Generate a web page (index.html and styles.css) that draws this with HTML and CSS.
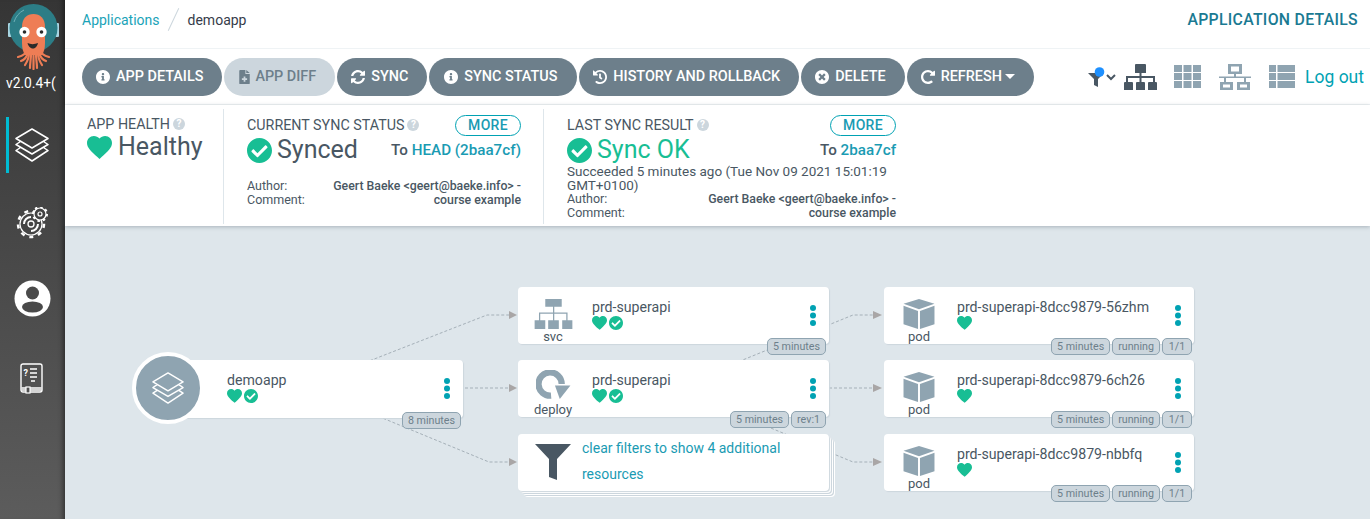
FILE: index.html
```html
<!DOCTYPE html>
<html>
<head>
    <title>demoapp - Application Details</title>
    <link rel="stylesheet" href="styles.css">
</head>
<body>
    <svg class="defs" width="0" height="0">
        <symbol id="i-heart" viewBox="2 3 20 18.4"><path fill="currentColor" d="M12 21.35l-1.45-1.32C5.4 15.36 2 12.28 2 8.5 2 5.42 4.42 3 7.5 3c1.74 0 3.41.81 4.5 2.09C13.09 3.81 14.76 3 16.5 3 19.58 3 22 5.42 22 8.5c0 3.78-3.4 6.86-8.55 11.54L12 21.35z"/></symbol>
        <symbol id="i-check" viewBox="8 8 496 496"><path fill="currentColor" d="M504 256c0 136.967-111.033 248-248 248S8 392.967 8 256 119.033 8 256 8s248 111.033 248 248zM227.314 387.314l184-184c6.248-6.248 6.248-16.379 0-22.627l-22.627-22.627c-6.248-6.249-16.379-6.249-22.628 0L216 308.118l-70.059-70.059c-6.248-6.248-16.379-6.248-22.628 0l-22.627 22.627c-6.248 6.248-6.248 16.379 0 22.627l104 104c6.249 6.249 16.379 6.249 22.628.001z"/></symbol>
        <symbol id="i-info" viewBox="8 8 496 496"><path fill="currentColor" d="M256 8C119.043 8 8 119.083 8 256c0 136.997 111.043 248 248 248s248-111.003 248-248C504 119.083 392.957 8 256 8zm0 110c23.196 0 42 18.804 42 42s-18.804 42-42 42-42-18.804-42-42 18.804-42 42-42zm56 254c0 6.627-5.373 12-12 12h-88c-6.627 0-12-5.373-12-12v-24c0-6.627 5.373-12 12-12h12v-64h-12c-6.627 0-12-5.373-12-12v-24c0-6.627 5.373-12 12-12h64c6.627 0 12 5.373 12 12v100h12c6.627 0 12 5.373 12 12v24z"/></symbol>
        <symbol id="i-sync" viewBox="8 8 496 496"><path fill="currentColor" d="M370.72 133.28C339.458 104.008 298.888 87.962 255.848 88c-77.458.068-144.328 53.178-162.791 126.85-1.344 5.363-6.122 9.15-11.651 9.15H24.103c-7.498 0-13.194-6.807-11.807-14.176C33.933 94.924 134.813 8 256 8c66.448 0 126.791 26.136 171.315 68.685L463.03 40.97C478.149 25.851 504 36.559 504 57.941V192c0 13.255-10.745 24-24 24H345.941c-21.382 0-32.09-25.851-16.971-40.971l41.75-41.749zM32 296h134.059c21.382 0 32.09 25.851 16.971 40.971l-41.75 41.75c31.262 29.273 71.835 45.319 114.876 45.28 77.418-.07 144.315-53.144 162.787-126.849 1.344-5.363 6.122-9.15 11.651-9.15h57.304c7.498 0 13.194 6.807 11.807 14.176C478.067 417.076 377.187 504 256 504c-66.448 0-126.791-26.136-171.315-68.685L48.97 471.03C33.851 486.149 8 475.441 8 454.059V320c0-13.255 10.745-24 24-24z"/></symbol>
        <symbol id="i-history" viewBox="8 8 496 496"><path fill="currentColor" d="M504 255.531c.253 136.64-111.18 248.372-247.82 248.468-59.015.042-113.223-20.53-155.822-54.911-11.077-8.94-11.905-25.541-1.839-35.607l11.267-11.267c8.609-8.609 22.353-9.551 31.891-1.984C173.062 425.135 212.781 440 256 440c101.705 0 184-82.311 184-184 0-101.705-82.311-184-184-184-48.814 0-93.149 18.969-126.068 49.932l50.754 50.754c10.08 10.08 2.941 27.314-11.313 27.314H24c-8.837 0-16-7.163-16-16V38.627c0-14.254 17.234-21.393 27.314-11.314l49.372 49.372C129.209 34.136 189.552 8 256 8c136.81 0 247.747 110.78 248 247.531zm-180.912 78.784l9.823-12.63c8.138-10.463 6.253-25.542-4.21-33.679L288 256.349V152c0-13.255-10.745-24-24-24h-16c-13.255 0-24 10.745-24 24v135.651l65.409 50.874c10.463 8.137 25.541 6.253 33.679-4.21z"/></symbol>
        <symbol id="i-times" viewBox="8 8 496 496"><path fill="currentColor" d="M256 8C119 8 8 119 8 256s111 248 248 248 248-111 248-248S393 8 256 8zm121.6 313.1c4.7 4.7 4.7 12.3 0 17L338 377.6c-4.7 4.7-12.3 4.7-17 0L256 312l-65.1 65.6c-4.7 4.7-12.3 4.7-17 0L134.4 338c-4.7-4.7-4.7-12.3 0-17l65.6-65-65.6-65.1c-4.7-4.7-4.7-12.3 0-17l39.6-39.6c4.7-4.7 12.3-4.7 17 0l65 65.7 65.1-65.6c4.7-4.7 12.3-4.7 17 0l39.6 39.6c4.7 4.7 4.7 12.3 0 17L312 256l65.6 65.1z"/></symbol>
        <symbol id="i-redo" viewBox="8 8 496 496"><path fill="currentColor" d="M256.455 8c66.269.119 126.437 26.233 170.859 68.685l35.715-35.715C478.149 25.851 504 36.559 504 57.941V192c0 13.255-10.745 24-24 24H345.941c-21.382 0-32.09-25.851-16.971-40.971l41.75-41.75c-30.864-28.899-70.801-44.907-113.23-45.273-92.398-.798-170.283 73.977-169.484 169.442C88.764 348.009 162.184 424 256 424c41.127 0 79.997-14.678 110.629-41.556 4.743-4.161 11.906-3.908 16.368.553l39.662 39.662c4.872 4.872 4.631 12.815-.482 17.433C378.202 479.813 319.926 504 256 504 119.034 504 8.001 392.967 8 256.002 7.999 119.193 119.646 7.755 256.455 8z"/></symbol>
        <symbol id="i-file" viewBox="0 0 12 16"><path fill="currentColor" fill-rule="evenodd" d="M0 1a1 1 0 0 1 1-1h6v4.500h5V15a1 1 0 0 1-1 1H1a1 1 0 0 1-1-1zM5 7.500v2H3v1.800h2v2h2v-2h2V9.500H7v-2zM8 0l4 3.500H8z"/></symbol>
        <symbol id="i-layers" viewBox="0 0 34 34"><path fill="none" stroke="currentColor" stroke-width="1.5" stroke-linejoin="round" d="M17 1L33 10.500 17 20 1 10.500zM5.500 13.500L1 16.500 17 26 33 16.500 28.500 13.500M5.500 19.500L1 22.500 17 33 33 22.500 28.500 19.500"/></symbol>
        <symbol id="i-svc" viewBox="0 0 39 31"><path fill="currentColor" d="M11 0h17v8H11zM19 8h1.300v6H34v8h-1.300v-6.700H20.300V22H19v-6.700H5.800V22H4.500v-8H19zM0 22h11v9H0zM14 22h11v9H14zM28.500 22H39v9H28.500z"/></symbol>
        <symbol id="i-deploy" viewBox="0 0 35 30"><path fill="none" stroke="currentColor" stroke-width="6.500" d="M15 26.500A12 12 0 1 1 26 14.500"/><path fill="currentColor" d="M19 16h16L24 30z"/></symbol>
        <symbol id="i-pod" viewBox="0 0 32 31"><path fill="currentColor" d="M16 0l16 5-16 5.500L0 5zM0 7l15 5.500V31L0 26zM32 7l-15 5.500V31l15-5z"/></symbol>
        <symbol id="i-dots" viewBox="0 0 6 21"><circle cx="3" cy="3" r="3" fill="currentColor"/><circle cx="3" cy="10.500" r="3" fill="currentColor"/><circle cx="3" cy="18" r="3" fill="currentColor"/></symbol>
    </svg>

    <div class="app">
        <nav class="sidebar">
            <div class="logo">
                <svg width="54" height="70" viewBox="0 0 54 70">
                    <rect x="2" y="23" width="4" height="14" rx="1" fill="#a9d6e3"/>
                    <rect x="49" y="23" width="4" height="14" rx="1" fill="#a9d6e3"/>
                    <circle cx="27.500" cy="28" r="24" fill="#2c7d86"/>
                    <path d="M8 22A20 20 0 0 1 18 10" fill="none" stroke="#6fb0b8" stroke-width="1"/>
                    <g fill="none" stroke="#ee7d55" stroke-width="2.200" stroke-linecap="round">
                        <path d="M21 50c-1 4-5 6-9 7"/>
                        <path d="M22 52c-1 5-4 8-7 9"/>
                        <path d="M23 53c0 5-2 9-4 12"/>
                        <path d="M25 54c0 5-1 9-1 14"/>
                        <path d="M27.500 54v15"/>
                        <path d="M30 54c0 5 1 9 1 14"/>
                        <path d="M32 53c0 5 2 9 4 12"/>
                        <path d="M33 52c1 5 4 8 7 9"/>
                        <path d="M34 50c1 4 5 6 9 7"/>
                    </g>
                    <path d="M16 27c0-9 5-13 11.500-13S39 18 39 27v16c0 5-1 9-3 12H19c-2-3-3-7-3-12z" fill="#ee7d55"/>
                    <circle cx="18.500" cy="32" r="5.200" fill="#fff"/>
                    <circle cx="35.500" cy="32" r="5.200" fill="#fff"/>
                    <circle cx="18.500" cy="32" r="1.800" fill="#2b2b2b"/>
                    <circle cx="35.500" cy="32" r="1.800" fill="#2b2b2b"/>
                    <path d="M21.500 43c3 1.500 7 1.500 10.500 0-1 4-3 5.500-5 5.500s-4.500-1.500-5.500-5.500z" fill="#2b2b2b"/>
                </svg>
                <div class="version">v2.0.4+(</div>
            </div>
            <div class="nav-item nav-active">
                <svg class="nav-layers"><use href="#i-layers"/></svg>
            </div>
            <div class="nav-item nav-gear">
                <svg width="32" height="34" viewBox="0 0 32 34" fill="none" stroke="#fff">
                    <circle cx="15" cy="17" r="11" stroke-width="1.200"/>
                    <circle cx="15" cy="17" r="13" stroke-width="2.500" stroke-dasharray="4 5"/>
                    <circle cx="15" cy="17" r="3" stroke-width="1.300"/>
                    <path d="M8 17a7 7 0 0 1 7-7M15 24a7 7 0 0 0 7-7" stroke-width="2"/>
                    <circle cx="24" cy="7" r="6" stroke-width="1.200" fill="#424242"/>
                    <circle cx="24" cy="7" r="7" stroke-width="2" stroke-dasharray="2.500 3"/>
                    <circle cx="24" cy="7" r="2" stroke-width="1.200"/>
                </svg>
            </div>
            <div class="nav-item nav-user">
                <svg width="37" height="37" viewBox="0 0 37 37">
                    <circle cx="18.500" cy="18.500" r="18" fill="#fff"/>
                    <circle cx="18.500" cy="13" r="6.500" fill="#4a4a4a"/>
                    <ellipse cx="18.500" cy="27" rx="10.500" ry="5.500" fill="#4a4a4a"/>
                </svg>
            </div>
            <div class="nav-item nav-book">
                <svg width="24" height="31" viewBox="0 0 24 31" fill="none" stroke="#fff">
                    <rect x="1" y="1" width="21" height="28" rx="2" stroke-width="1.400"/>
                    <path d="M10 6h7M10 10h7M10 14h7M11 18h4M1.500 25h20M1.500 27h20" stroke-width="1.400"/>
                    <rect x="6" y="24" width="4" height="6" stroke-width="1.200" fill="#4f4f4f"/>
                    <text x="3.500" y="13" class="book-mark">?</text>
                </svg>
            </div>
        </nav>

        <div class="main">
            <header class="topbar">
                <div class="crumbs">
                    <a class="crumb-link">Applications</a>
                    <span class="crumb-sep"></span>
                    <span class="crumb-current">demoapp</span>
                </div>
                <div class="page-title">APPLICATION DETAILS</div>
            </header>

            <div class="toolbar">
                <div class="actions">
                    <button class="btn"><svg class="btn-icon"><use href="#i-info"/></svg>APP DETAILS</button>
                    <button class="btn btn-disabled"><svg class="btn-icon btn-file"><use href="#i-file"/></svg>APP DIFF</button>
                    <button class="btn"><svg class="btn-icon"><use href="#i-sync"/></svg>SYNC</button>
                    <button class="btn btn-status"><svg class="btn-icon"><use href="#i-info"/></svg>SYNC STATUS</button>
                    <button class="btn"><svg class="btn-icon"><use href="#i-history"/></svg>HISTORY AND ROLLBACK</button>
                    <button class="btn"><svg class="btn-icon"><use href="#i-times"/></svg>DELETE</button>
                    <button class="btn"><svg class="btn-icon"><use href="#i-redo"/></svg>REFRESH<span class="caret"></span></button>
                </div>
                <div class="views">
                    <svg class="view-filter" width="28" height="20" viewBox="0 0 28 20">
                        <path fill="#495763" d="M0 6h16l-6 6v8l-4-2v-6z"/>
                        <circle cx="11.500" cy="5" r="4.800" fill="#1e90ff"/>
                        <path fill="none" stroke="#495763" stroke-width="2" d="M19 8l4 4 4-4"/>
                    </svg>
                    <svg class="view-icon view-tree" width="33" height="26" viewBox="0 0 33 26">
                        <path fill="#495763" d="M12 0h9a1 1 0 0 1 1 1v8h-4.500v3H31v6h-2v-4H17.500v4h-2v-4H4v4H2v-6h13.500V9H11V1a1 1 0 0 1 1-1zM1 18h7a1 1 0 0 1 1 1v7H0v-7a1 1 0 0 1 1-1zM13 18h7a1 1 0 0 1 1 1v7h-9v-7a1 1 0 0 1 1-1zM25 18h7a1 1 0 0 1 1 1v7h-9v-7a1 1 0 0 1 1-1z"/>
                    </svg>
                    <svg class="view-icon" width="27" height="23" viewBox="0 0 27 23">
                        <path fill="#8fa4b1" d="M0 0h8v7H0zM9.500 0h8v7h-8zM19 0h8v7h-8zM0 8h8v7H0zM9.500 8h8v7h-8zM19 8h8v7h-8zM0 16h8v7H0zM9.500 16h8v7h-8zM19 16h8v7h-8z"/>
                    </svg>
                    <svg class="view-icon" width="32" height="26" viewBox="0 0 32 26">
                        <path fill="#8fa4b1" fill-rule="evenodd" d="M9 0h14v10h-6v2.500h15v1.500H27v4h4v8H18v-8h7v-4H7v4h7v8H1v-8h4v-4H0v-1.500h15V10H9zM12 2.500v5h8v-5zM4 20.500v3h7v-3zM21 20.500v3h7v-3z"/>
                    </svg>
                    <svg class="view-icon view-last" width="26" height="23" viewBox="0 0 26 23">
                        <path fill="#8fa4b1" d="M0 0h7v7H0zM8.500 0H26v7H8.500zM0 8h7v7H0zM8.500 8H26v7H8.500zM0 16h7v7H0zM8.500 16H26v7H8.500z"/>
                    </svg>
                    <a class="logout">Log out</a>
                </div>
            </div>

            <div class="summary">
                <section class="panel panel-health">
                    <div class="panel-title">APP HEALTH <span class="help">?</span></div>
                    <div class="status status-health">
                        <svg class="status-heart"><use href="#i-heart"/></svg>
                        <span class="status-text">Healthy</span>
                    </div>
                </section>

                <section class="panel panel-sync">
                    <div class="panel-head">
                        <div class="panel-title">CURRENT SYNC STATUS <span class="help">?</span></div>
                        <a class="more">MORE</a>
                    </div>
                    <div class="status-row">
                        <div class="status">
                            <svg class="status-check"><use href="#i-check"/></svg>
                            <span class="status-text">Synced</span>
                        </div>
                        <div class="target">To <a>HEAD (2baa7cf)</a></div>
                    </div>
                    <div class="meta meta-sync">
                        <span>Author:</span><span class="meta-value">Geert Baeke &lt;geert@baeke.info&gt; -</span>
                        <span>Comment:</span><span class="meta-value">course example</span>
                    </div>
                </section>

                <section class="panel panel-result">
                    <div class="panel-head">
                        <div class="panel-title">LAST SYNC RESULT <span class="help">?</span></div>
                        <a class="more">MORE</a>
                    </div>
                    <div class="status-row">
                        <div class="status">
                            <svg class="status-check"><use href="#i-check"/></svg>
                            <span class="status-text status-ok">Sync OK</span>
                        </div>
                        <div class="target">To <a>2baa7cf</a></div>
                    </div>
                    <div class="meta-line">Succeeded 5 minutes ago (Tue Nov 09 2021 15:01:19 GMT+0100)</div>
                    <div class="meta">
                        <span>Author:</span><span class="meta-value">Geert Baeke &lt;geert@baeke.info&gt; -</span>
                        <span>Comment:</span><span class="meta-value">course example</span>
                    </div>
                </section>
            </div>

            <div class="graph">
                <svg class="edges" viewBox="65 226 1305 293">
                    <g class="edge-lines">
                        <path d="M300 388L487 315H510"/>
                        <path d="M300 388H510"/>
                        <path d="M300 384L489 462H510"/>
                        <path d="M674 388L853 315H875"/>
                        <path d="M674 388H875"/>
                        <path d="M674 388L853 462H875"/>
                    </g>
                    <g class="edge-heads">
                        <path d="M509 311l8 4-8 4zM509 384l8 4-8 4zM509 458l8 4-8 4zM873 311l9 4-9 4zM873 384l9 4-9 4zM873 458l9 4-9 4z"/>
                    </g>
                </svg>

                <div class="node node-app">
                    <div class="node-circle"><svg class="circle-icon"><use href="#i-layers"/></svg></div>
                    <div class="node-info node-info-app">
                        <div class="node-name">demoapp</div>
                        <div class="node-status">
                            <svg class="mini-heart"><use href="#i-heart"/></svg>
                            <svg class="mini-check"><use href="#i-check"/></svg>
                        </div>
                    </div>
                    <svg class="kebab"><use href="#i-dots"/></svg>
                    <div class="tags"><span class="tag">8 minutes</span></div>
                </div>

                <div class="node node-svc">
                    <div class="node-kind"><svg class="kind-svc"><use href="#i-svc"/></svg><span class="kind-label">svc</span></div>
                    <div class="node-info">
                        <div class="node-name">prd-superapi</div>
                        <div class="node-status">
                            <svg class="mini-heart"><use href="#i-heart"/></svg>
                            <svg class="mini-check"><use href="#i-check"/></svg>
                        </div>
                    </div>
                    <svg class="kebab"><use href="#i-dots"/></svg>
                    <div class="tags"><span class="tag">5 minutes</span></div>
                </div>

                <div class="node node-deploy">
                    <div class="node-kind"><svg class="kind-deploy"><use href="#i-deploy"/></svg><span class="kind-label">deploy</span></div>
                    <div class="node-info">
                        <div class="node-name">prd-superapi</div>
                        <div class="node-status">
                            <svg class="mini-heart"><use href="#i-heart"/></svg>
                            <svg class="mini-check"><use href="#i-check"/></svg>
                        </div>
                    </div>
                    <svg class="kebab"><use href="#i-dots"/></svg>
                    <div class="tags"><span class="tag">5 minutes</span><span class="tag">rev:1</span></div>
                </div>

                <div class="node node-filter">
                    <svg class="filter-icon" viewBox="0 0 36 36"><path fill="#495763" d="M0 0h36L22 15v21l-8-3V15z"/></svg>
                    <a class="filter-text">clear filters to show 4 additional resources</a>
                </div>

                <div class="node node-pod node-pod-a">
                    <div class="node-kind"><svg class="kind-pod"><use href="#i-pod"/></svg><span class="kind-label">pod</span></div>
                    <div class="node-info">
                        <div class="node-name">prd-superapi-8dcc9879-56zhm</div>
                        <div class="node-status"><svg class="mini-heart"><use href="#i-heart"/></svg></div>
                    </div>
                    <svg class="kebab"><use href="#i-dots"/></svg>
                    <div class="tags"><span class="tag">5 minutes</span><span class="tag">running</span><span class="tag tag-count">1/1</span></div>
                </div>

                <div class="node node-pod node-pod-b">
                    <div class="node-kind"><svg class="kind-pod"><use href="#i-pod"/></svg><span class="kind-label">pod</span></div>
                    <div class="node-info">
                        <div class="node-name">prd-superapi-8dcc9879-6ch26</div>
                        <div class="node-status"><svg class="mini-heart"><use href="#i-heart"/></svg></div>
                    </div>
                    <svg class="kebab"><use href="#i-dots"/></svg>
                    <div class="tags"><span class="tag">5 minutes</span><span class="tag">running</span><span class="tag tag-count">1/1</span></div>
                </div>

                <div class="node node-pod node-pod-c">
                    <div class="node-kind"><svg class="kind-pod"><use href="#i-pod"/></svg><span class="kind-label">pod</span></div>
                    <div class="node-info">
                        <div class="node-name">prd-superapi-8dcc9879-nbbfq</div>
                        <div class="node-status"><svg class="mini-heart"><use href="#i-heart"/></svg></div>
                    </div>
                    <svg class="kebab"><use href="#i-dots"/></svg>
                    <div class="tags"><span class="tag">5 minutes</span><span class="tag">running</span><span class="tag tag-count">1/1</span></div>
                </div>
            </div>
        </div>
    </div>
</body>
</html>
```

FILE: styles.css
```css
* {
    box-sizing: border-box;
}

body {
    margin: 0;
    font-family: Roboto, "Liberation Sans", sans-serif;
    color: #495763;
    background-color: #fff;
    overflow: hidden;
}

a {
    color: #00a2b3;
}

.defs {
    position: absolute;
}

.app {
    display: flex;
    height: 519px;
}

/* sidebar */
.sidebar {
    width: 65px;
    flex-shrink: 0;
    background: linear-gradient(to bottom, #353535, #5c5c5c);
    box-shadow: inset -6px 0 5px -4px rgba(0, 0, 0, 0.45);
    color: #fff;
}

.logo {
    padding: 0 0 0 6px;
    height: 117px;
}

.logo svg {
    display: block;
}

.version {
    margin-top: 4px;
    font-size: 13.800px;
    line-height: 18px;
    white-space: nowrap;
}

.nav-item {
    display: flex;
    justify-content: center;
    align-items: center;
    width: 64px;
}

.nav-active {
    height: 56px;
    border-left: 3px solid #00bcd4;
    margin-left: 6px;
    width: 58px;
    padding-right: 10px;
}

.nav-layers {
    width: 34px;
    height: 34px;
    color: #fff;
}

.nav-gear {
    margin-top: 34px;
    height: 34px;
}

.nav-user {
    margin-top: 39px;
    height: 37px;
}

.nav-book {
    margin-top: 46px;
    height: 31px;
}

.book-mark {
    font-family: Roboto, sans-serif;
    font-size: 9px;
    font-weight: 700;
    fill: #fff;
    stroke: none;
}

/* top of the page */
.main {
    flex: 1;
    display: flex;
    flex-direction: column;
    min-width: 0;
}

.topbar {
    height: 49px;
    flex-shrink: 0;
    display: flex;
    justify-content: space-between;
    align-items: flex-start;
    padding: 11px 12px 0 17px;
    border-bottom: 1px solid #eff3f5;
}

.crumbs {
    display: flex;
    align-items: center;
    height: 17px;
    font-size: 14px;
}

.crumb-link {
    color: #1aa3b8;
}

.crumb-sep {
    width: 1px;
    height: 25px;
    margin: 0 14px 0 13px;
    background-color: #ccd6dd;
    transform: rotate(25deg);
}

.crumb-current {
    color: #363c4a;
}

.page-title {
    font-size: 15.800px;
    line-height: 17px;
    color: #1a7a92;
    font-weight: 500;
    letter-spacing: 0.3px;
}

.toolbar {
    height: 56px;
    flex-shrink: 0;
    display: flex;
    justify-content: space-between;
    align-items: center;
    padding: 0 6px 0 17px;
    border-bottom: 1px solid #eff3f5;
}

.actions {
    display: flex;
    gap: 2px;
}

.btn {
    display: flex;
    align-items: center;
    height: 38px;
    padding: 0 19px 0 14px;
    border: none;
    border-radius: 19px;
    background-color: #6d7f8b;
    color: #fff;
    font-family: Roboto, sans-serif;
    font-size: 14.400px;
    font-weight: 500;
    white-space: nowrap;
}

.btn-status {
    padding: 0 20px 0 15px;
}

.btn-disabled {
    background-color: #ccd6dd;
    color: #6d7f8b;
}

.btn-icon {
    width: 14px;
    height: 14px;
    margin-right: 6px;
}

.btn-file {
    width: 11px;
    height: 14px;
    margin-right: 5px;
    margin-left: 1px;
}

.caret {
    width: 0;
    height: 0;
    margin-left: 3px;
    border-left: 5px solid transparent;
    border-right: 5px solid transparent;
    border-top: 5px solid #fff;
}

.views {
    display: flex;
    align-items: center;
}

.view-filter {
    margin-right: 8px;
}

.view-icon {
    margin-right: 18px;
}

.view-tree {
    margin-right: 17px;
}

.view-last {
    margin-right: 10px;
}

.logout {
    font-size: 17.500px;
}

/* summary panels */
.summary {
    height: 121px;
    flex-shrink: 0;
    display: flex;
    position: relative;
    z-index: 1;
    padding-top: 4px;
    background-color: #fff;
    box-shadow: 0 1px 4px rgba(73, 87, 99, 0.35);
}

.panel {
    height: 115px;
    border-right: 1px solid #dee6eb;
}

.panel-health {
    width: 159px;
    padding: 4px 0 0 22px;
}

.panel-sync {
    width: 320px;
    padding: 5px 22px 0 23px;
}

.panel-result {
    width: 352px;
    padding: 5px 0 0 23px;
    border-right: none;
}

.panel-title {
    display: flex;
    align-items: center;
    gap: 3px;
    font-size: 14.300px;
    line-height: 22px;
    color: #495763;
    white-space: nowrap;
}

.panel-head {
    display: flex;
    justify-content: space-between;
    align-items: center;
}

.help {
    display: inline-block;
    width: 12px;
    height: 12px;
    border-radius: 50%;
    background-color: #ccd6dd;
    color: #fff;
    font-size: 10px;
    font-weight: 700;
    line-height: 12px;
    text-align: center;
}

.more {
    width: 66px;
    height: 21px;
    border: 1px solid #00a2b3;
    border-radius: 11px;
    font-size: 14px;
    font-weight: 500;
    line-height: 18px;
    text-align: center;
    letter-spacing: 0.3px;
    color: #1a9bb3;
}

.status {
    display: flex;
    align-items: center;
    gap: 5px;
    color: #18be94;
}

.status-health {
    gap: 6px;
    margin-top: -3px;
}

.status-row {
    display: flex;
    justify-content: space-between;
    align-items: center;
    height: 30px;
    margin-top: -1px;
}

.status-heart {
    width: 25px;
    height: 23px;
}

.status-check {
    width: 25px;
    height: 25px;
}

.status-text {
    font-size: 25px;
    line-height: 30px;
    color: #495763;
}

.status-ok {
    color: #18be94;
}

.target {
    font-size: 15.200px;
    font-weight: 500;
    color: #495763;
}

.target a {
    color: #1a9bb3;
}

.meta {
    display: grid;
    grid-template-columns: auto 1fr;
    font-size: 12.500px;
    line-height: 14px;
    color: #495763;
}

.meta-sync {
    margin-top: 14px;
}

.meta-value {
    text-align: right;
    font-size: 12.300px;
    font-weight: 500;
}

.meta-line {
    font-size: 13.500px;
    line-height: 13.500px;
    color: #495763;
}

/* resource tree, nodes sit on a free canvas */
.graph {
    flex: 1;
    position: relative;
    background-color: #dee6eb;
    overflow: hidden;
}

.edges {
    position: absolute;
    left: 0;
    top: 0;
    width: 1305px;
    height: 293px;
}

.edge-lines path {
    fill: none;
    stroke: #a5b0b8;
    stroke-width: 1;
    stroke-dasharray: 3 2;
}

.edge-heads path {
    fill: #a9a6a6;
}

.node {
    position: absolute;
    display: flex;
    height: 57px;
    width: 311px;
    border-radius: 4px;
    background-color: #fff;
    box-shadow: 1px 1px 1px #ccd6dd;
}

.node-app {
    left: 103px;
    top: 134px;
    width: 295px;
    height: 58px;
}

.node-svc {
    left: 453px;
    top: 61px;
}

.node-deploy {
    left: 453px;
    top: 134px;
}

.node-filter {
    left: 453px;
    top: 208px;
    box-shadow: 1px 1px 1px #ccd6dd, 2px 2px 0 #fff, 3px 3px 0 #ccd6dd, 4px 4px 0 #fff, 5px 5px 0 #ccd6dd, 6px 6px 0 #fff;
}

.node-pod {
    left: 819px;
    width: 310px;
}

.node-pod-a {
    top: 61px;
}

.node-pod-b {
    top: 134px;
}

.node-pod-c {
    top: 208px;
}

.node-circle {
    position: absolute;
    left: -36px;
    top: -8px;
    display: flex;
    justify-content: center;
    align-items: center;
    width: 72px;
    height: 72px;
    border: 4px solid #fff;
    border-radius: 50%;
    background-color: #8fa4b1;
}

.circle-icon {
    width: 32px;
    height: 32px;
    color: #fff;
}

.node-kind {
    display: flex;
    flex-direction: column;
    align-items: center;
    width: 70px;
    padding-top: 12px;
    flex-shrink: 0;
    color: #8fa4b1;
}

.kind-svc {
    width: 39px;
    height: 31px;
    margin-bottom: 1px;
}

.kind-deploy {
    width: 35px;
    height: 30px;
    margin-top: -2px;
    margin-bottom: 4px;
}

.kind-pod {
    width: 32px;
    height: 31px;
    margin-bottom: 1px;
}

.kind-label {
    font-size: 13px;
    line-height: 14px;
    color: #495763;
}

.node-info {
    padding: 12px 0 0 4px;
    min-width: 0;
}

.node-info-app {
    padding-left: 59px;
}

.node-pod .node-info {
    padding-left: 3px;
}

.node-name {
    font-size: 14.150px;
    line-height: 16px;
    color: #495763;
    white-space: nowrap;
}

.node-status {
    display: flex;
    align-items: center;
    gap: 2px;
    margin-top: 1px;
    color: #18be94;
}

.mini-heart {
    width: 15px;
    height: 14px;
}

.mini-check {
    width: 14px;
    height: 14px;
}

.kebab {
    width: 6px;
    height: 21px;
    margin: 18px 13px 0 auto;
    flex-shrink: 0;
    color: #00a2b3;
}

.tags {
    position: absolute;
    right: 3px;
    bottom: -11px;
    display: flex;
    gap: 2px;
}

.node-pod .tags,
.node-app .tags {
    right: 2px;
}

.tag {
    height: 17px;
    padding: 0 5px;
    border: 1px solid #8fa4b1;
    border-radius: 5px;
    background-color: #ccd6dd;
    color: #6d7f8b;
    font-size: 10.700px;
    line-height: 15px;
    white-space: nowrap;
}

.tag-count {
    width: 30px;
    padding: 0;
    text-align: center;
}

.filter-icon {
    width: 36px;
    height: 36px;
    margin: 10px 11px 0 17px;
    flex-shrink: 0;
}

.filter-text {
    width: 220px;
    font-size: 14px;
    line-height: 26px;
    margin-top: 1px;
    color: #1a9bb3;
}
```
